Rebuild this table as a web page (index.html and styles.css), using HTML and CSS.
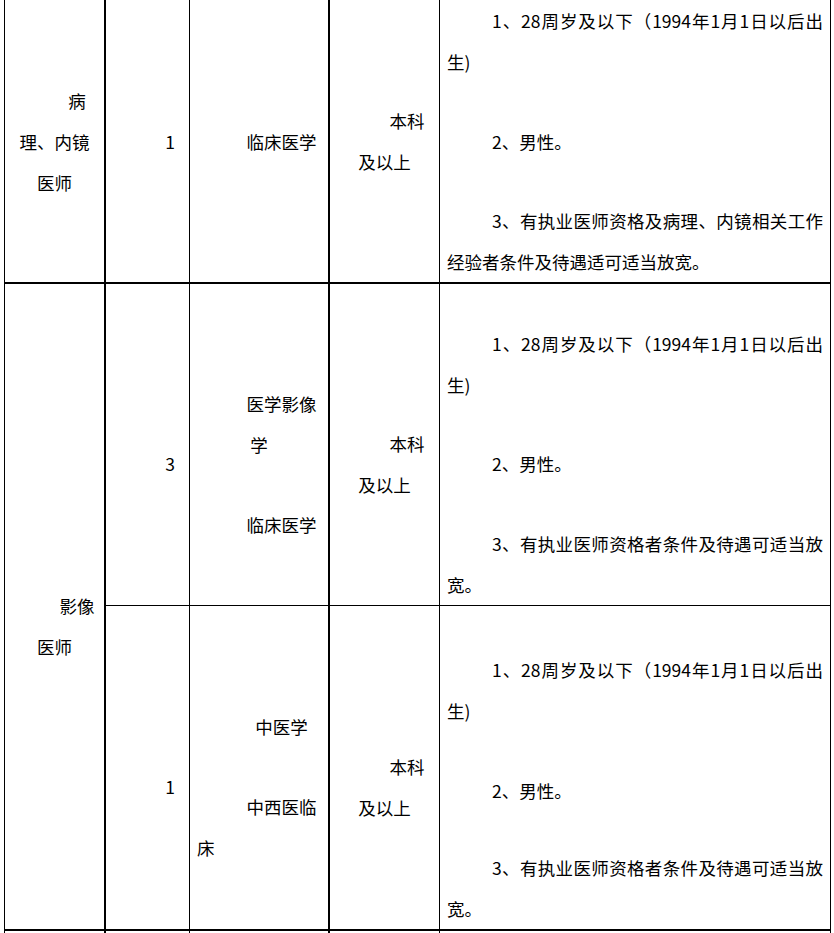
FILE: index.html
```html
<!DOCTYPE html>
<html lang="zh-CN">
<head>
<meta charset="utf-8">
<title>招聘岗位</title>
<link rel="stylesheet" href="styles.css">
</head>
<body>
<table class="req">
  <tr class="r1">
    <td class="k1 bb2"><p class="mid">病理、内镜医师</p></td>
    <td class="k2 bb2"><p class="mid">1</p></td>
    <td class="k3 bb2"><p class="mid">临床医学</p></td>
    <td class="k4 bb2"><p class="mid">本科及以上</p></td>
    <td class="k5 bb2">
      <p>1、28周岁及以下（1994年1月1日以后出生)</p>
      <p>2、男性。</p>
      <p>3、有执业医师资格及病理、内镜相关工作经验者条件及待遇适可适当放宽。</p>
    </td>
  </tr>
  <tr class="r2">
    <td class="k1 bb2 lead" rowspan="2"><p class="mid">影像医师</p></td>
    <td class="k2 bb1 lead"><p class="mid">3</p></td>
    <td class="k3 bb1 lead">
      <p class="mid">医学影像学</p>
      <p class="mid">临床医学</p>
    </td>
    <td class="k4 bb1 lead"><p class="mid">本科及以上</p></td>
    <td class="k5 bb1 lead">
      <p>1、28周岁及以下（1994年1月1日以后出生)</p>
      <p>2、男性。</p>
      <p>3、有执业医师资格者条件及待遇可适当放宽。</p>
    </td>
  </tr>
  <tr class="r3">
    <td class="k2 bb2 lead"><p class="mid">1</p></td>
    <td class="k3 bb2 lead">
      <p class="mid">中医学</p>
      <p class="mid last-left">中西医临床</p>
    </td>
    <td class="k4 bb2 lead"><p class="mid">本科及以上</p></td>
    <td class="k5 bb2 lead-lg">
      <p>1、28周岁及以下（1994年1月1日以后出生)</p>
      <p>2、男性。</p>
      <p class="tight">3、有执业医师资格者条件及待遇可适当放宽。</p>
    </td>
  </tr>
  <tr class="r4">
    <td class="k1"></td>
    <td class="k2"></td>
    <td class="k3"></td>
    <td class="k4"></td>
    <td class="k5"></td>
  </tr>
</table>
</body>
</html>
```

FILE: styles.css
```css
html, body {
  margin: 0;
  padding: 0;
  background: #ffffff;
}

body {
  font-family: "Noto Sans CJK SC", sans-serif;
  font-size: 17.5px;
  line-height: 41px;
  color: #000000;
}

.req {
  border-collapse: separate;
  border-spacing: 0;
  table-layout: fixed;
  width: 827px;
  margin-left: 4px;
  border-left: 1px solid #000000;
}

.req td {
  box-sizing: border-box;
  padding: 0 7px;
  vertical-align: middle;
  border-right: 1px solid #000000;
}

.req p {
  margin: 0;
  text-indent: 45px;
  text-align: justify;
}

.req p + p {
  margin-top: 38.5px;
}

.req p.tight {
  margin-top: 36.5px;
}

.req .mid {
  text-align: center;
}

.req .last-left {
  text-align-last: left;
}

.req .k1 { width: 101px; border-right-width: 2px; }
.req .k2 { width: 84px; }
.req .k3 { width: 140px; border-right-width: 2px; }
.req .k4 { width: 110px; }
.req .k5 { width: 391px; }

.req .bb1 { border-bottom: 1px solid #000000; }
.req .bb2 { border-bottom: 2px solid #000000; }

.req .lead { padding-top: 38.5px; }
.req .lead-lg { padding-top: 43px; }

.r1 { height: 284px; }
.r2 { height: 322px; }
.r3 { height: 325px; }
.r4 { height: 40px; }
```
